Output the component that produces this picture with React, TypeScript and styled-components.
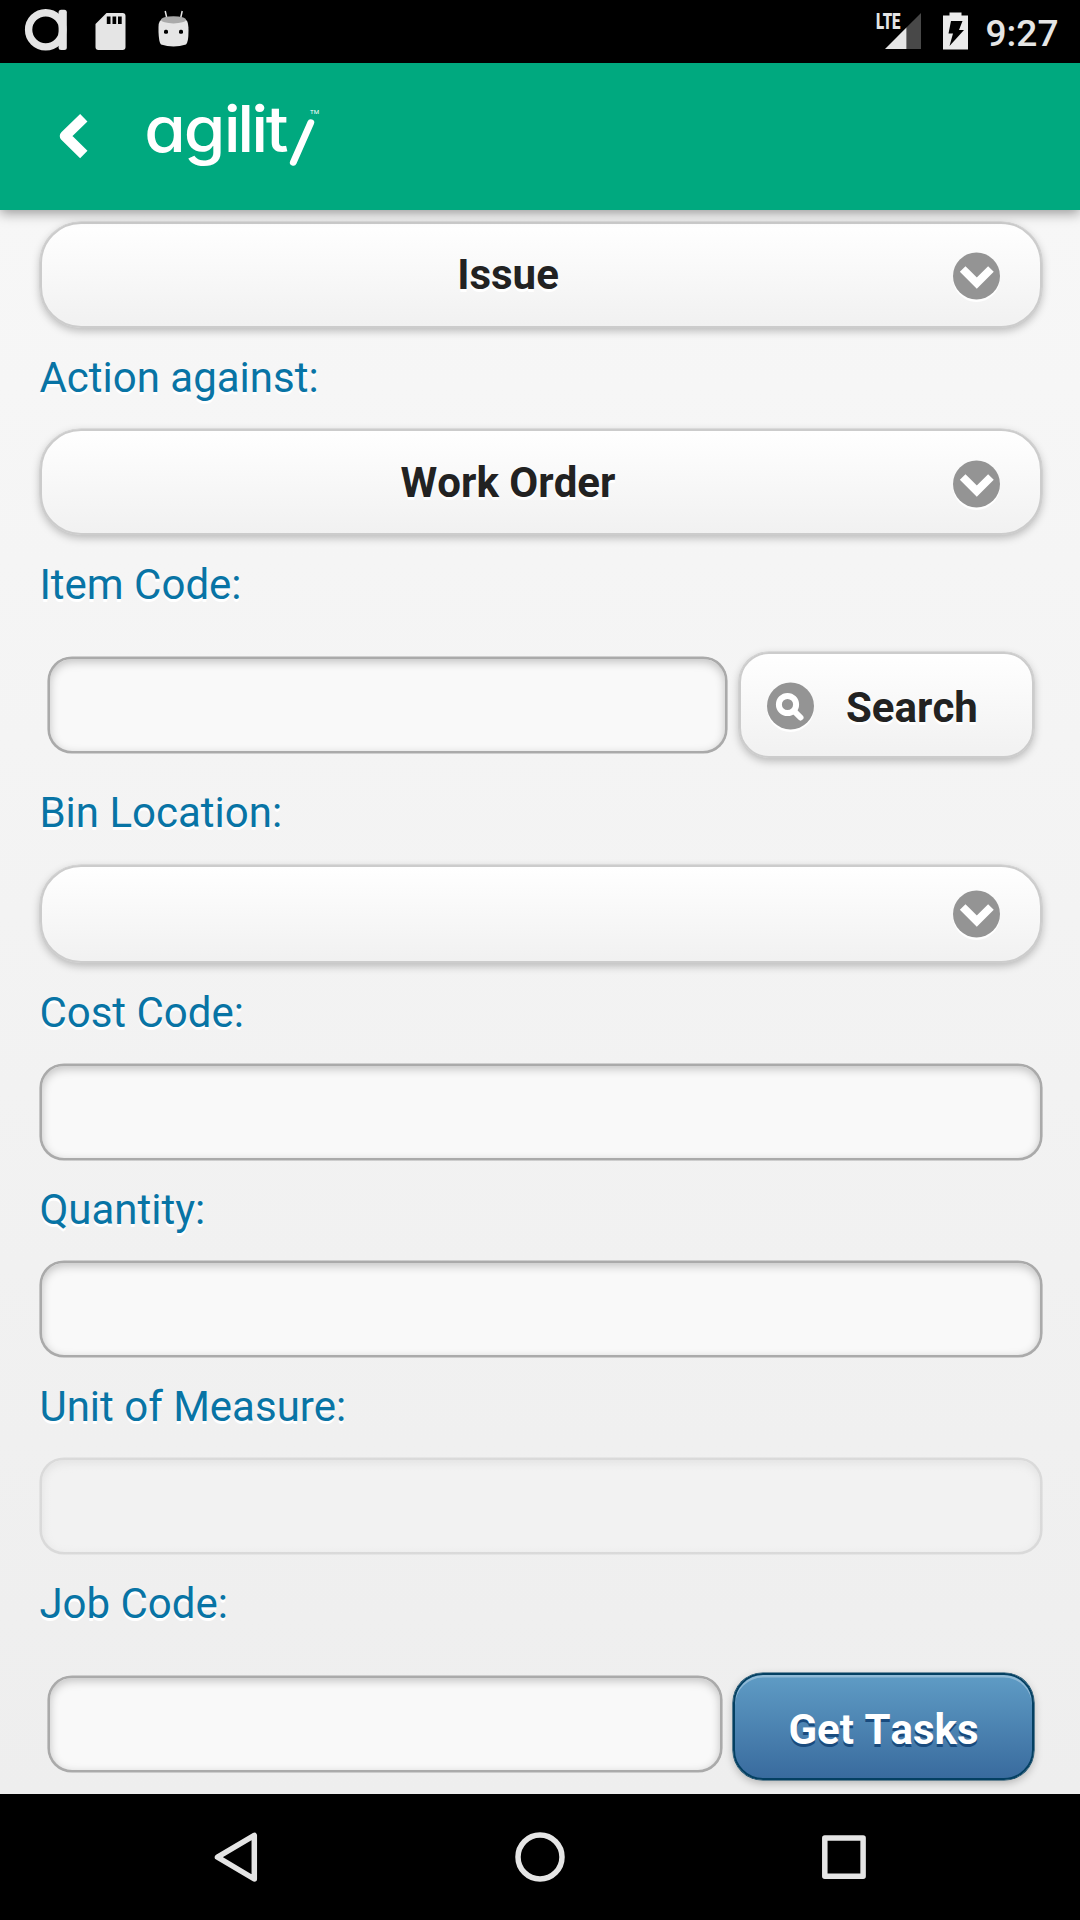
import React from "react";
import styled, { createGlobalStyle, css } from "styled-components";

const GlobalStyle = createGlobalStyle`
  * { box-sizing: border-box; }
  body { margin: 0; background: #000; }
`;

const Screen = styled.div`
  width: 1080px;
  height: 1920px;
  display: flex;
  flex-direction: column;
  overflow: hidden;
  font-family: Roboto, "Liberation Sans", sans-serif;
  font-size: 42px;
`;

const StatusBar = styled.div`
  height: 63px;
  flex: none;
  display: flex;
  justify-content: space-between;
  background: #000;
`;

const Header = styled.header`
  height: 147px;
  flex: none;
  background: #00a97f;
  box-shadow: 0 3px 12px rgba(0, 0, 0, 0.4);
  z-index: 1;
`;

const Page = styled.main`
  flex: 1;
  display: flex;
  flex-direction: column;
  padding: 12px 38px 0 40px;
  background: linear-gradient(#f7f7f7, #eee);
  overflow: hidden;
`;

const Label = styled.label<{ $gap?: number }>`
  margin: ${(p) => p.$gap ?? 25}px 0 0 -0.6px;
  height: 50px;
  line-height: 50px;
  color: #0874a5;
  text-shadow: 0 2.6px 0 #fff;
`;

const raised = css`
  border: 2px solid #ccc;
  background: linear-gradient(#fff, #f1f1f1);
  box-shadow: 0 0 0 0.6px #ccc, 0 3px 8px rgba(0, 0, 0, 0.25);
  color: #222;
  font: bold 42px/50px Roboto, "Liberation Sans", sans-serif;
  font-kerning: none;
  text-shadow: 0 2.6px 0 #fff;
`;

const Select = styled.button<{ $gap?: number; $height?: number; $drop?: number }>`
  ${raised}
  flex: none;
  display: flex;
  align-items: center;
  width: 1002px;
  height: ${(p) => p.$height ?? 106}px;
  margin: ${(p) => p.$gap ?? 0}px 0 0;
  padding: ${(p) => p.$drop ?? 0}px 39px 0 40px;
  border-radius: 41px;
`;

const SelectText = styled.span`
  flex: 1;
  padding-right: 18px;
  text-align: center;
`;

const IconDisc = styled.svg<{ $drop?: number }>`
  flex: none;
  display: block;
  width: 49px;
  height: 50px;
  margin-top: ${(p) => p.$drop ?? 4}px;
`;

const Input = styled.input<{ $gap?: number; $width?: number }>`
  flex: none;
  display: block;
  width: ${(p) => p.$width ?? 1002}px;
  height: 96px;
  margin: ${(p) => p.$gap ?? 26}px 0 0;
  padding: 0 16px;
  border: 2px solid #aaa;
  border-radius: 24px;
  background: #f9f9f9;
  box-shadow: 0 0 0 0.6px #aaa, inset 0 3px 10px rgba(0, 0, 0, 0.22);
  font: 42px Roboto, sans-serif;
  &:disabled {
    opacity: 0.3;
  }
`;

const LookupRow = styled.div<{ $gap: number }>`
  display: flex;
  justify-content: space-between;
  margin-top: ${(p) => p.$gap}px;
  padding: 0 8px;
`;

const SearchButton = styled.button`
  ${raised}
  display: flex;
  align-items: center;
  width: 295px;
  height: 106px;
  padding: 0 0 0 25px;
  border-radius: 30px;
`;

const SearchText = styled.span`
  margin: 6px 0 0 31px;
`;

const TasksButton = styled.button`
  ${raised}
  width: 301px;
  height: 107px;
  padding: 7px 0 0;
  border: 2px solid #044062;
  border-radius: 30px;
  background: linear-gradient(#5f9cc5, #396b9e);
  box-shadow: 0 0 0 0.6px #044062, 0 3px 8px rgba(0, 0, 0, 0.25),
    inset 0 2.6px 0 rgba(255, 255, 255, 0.3);
  color: #fff;
  text-shadow: 0 2.6px 0 #194b7e;
`;

const NavBar = styled.nav`
  height: 126px;
  flex: none;
  background: #000;
`;

const Drawing = styled.svg`
  display: block;
`;

const Wordmark = styled.text`
  font: 500 64px Inter, sans-serif;
  font-feature-settings: "cv11" 1;
`;

function ArrowDisc({ drop }: { drop?: number }) {
  return (
    <IconDisc viewBox="0 0 49 50" $drop={drop}>
      <circle cx="24.5" cy="26.5" r="23.5" fill="#fff" />
      <circle cx="24.5" cy="24" r="23.5" fill="#949494" />
      <path d="M13.500 19.800 24.8 31 36.100 19.800" fill="none" stroke="#fff" strokeWidth="8" strokeLinecap="square" />
    </IconDisc>
  );
}

function SearchDisc() {
  return (
    <IconDisc viewBox="0 0 49 50">
      <circle cx="24.5" cy="26.5" r="23.5" fill="#fff" />
      <circle cx="24.5" cy="24" r="23.5" fill="#949494" />
      <circle cx="21.5" cy="22.5" r="8.6" fill="none" stroke="#fff" strokeWidth="6" />
      <path d="M28 29 34.5 35.500" stroke="#fff" strokeWidth="6" strokeLinecap="round" />
    </IconDisc>
  );
}

export default function App() {
  return (
    <>
      <GlobalStyle />
      <Screen>
        <StatusBar>
          <Drawing width="240" height="63" fill="#e5e5e5">
            <circle cx="45.700" cy="29.800" r="17.100" fill="none" stroke="#e5e5e5" strokeWidth="7.400" />
            <rect x="58.600" y="9.700" width="8.200" height="40.300" rx="2.500" />
            <path d="M106.500 13H122.500Q125.500 13 125.500 16V47Q125.500 50 122.500 50H98.500Q95.500 50 95.500 47V24Z" />
            <path d="M106.800 16.500h3.700v7.500h-3.700zM112.500 16.500h3.700v7.500h-3.700zM118 16.500h3.700v7.500H118z" fill="#000" />
            <path d="M165.200 11 167.500 21M182.200 11 180 21" stroke="#e5e5e5" strokeWidth="1.500" />
            <path d="M161 20Q158 21 158.500 32 159 43 161 44.500 173.500 48.500 186 44.500 188.500 42 188.500 31 188.500 21 186 20Z" />
            <ellipse cx="173.500" cy="19.800" rx="12.500" ry="3.600" fill="#aaa" />
            <rect x="164" y="29.700" width="4" height="4" rx="1.500" fill="#000" />
            <rect x="179" y="29.700" width="4" height="4" rx="1.500" fill="#000" />
          </Drawing>
          <Drawing width="240" height="63" fill="#e5e5e5">
            <text x="36" y="29" fontSize="22" fontWeight="900" fontFamily="Roboto" textLength="24.500" lengthAdjust="spacingAndGlyphs">LTE</text>
            <path d="M45 49 66.700 27.300V49Z" />
            <path d="M66.700 27.300 81 13V49H66.700Z" fill="#484848" />
            <path d="M103 15.500h6.500v-3h12v3h6.500v34h-25z" fill="#ebebeb" />
            <path d="M111 21h11.500l-3.500 9h5L109.500 46l3.500-12.500h-4.500z" fill="#000" />
            <text x="145.500" y="46" fontSize="37.500" fontWeight="500" fontFamily="Roboto" textLength="73" lengthAdjust="spacingAndGlyphs">9:27</text>
          </Drawing>
        </StatusBar>
        <Header>
          <Drawing width="360" height="147" fill="#fff">
            <path d="M83.800 54.700 65 73 83.800 91.500" fill="none" stroke="#fff" strokeWidth="10.500" strokeLinejoin="round" />
            <Wordmark y="89" transform="scale(1.05 1)" x="137.400 175 213 226 239.400 253">agilit</Wordmark>
            <path d="M293.300 99.300 310.800 59.700" stroke="#fff" strokeWidth="6.800" strokeLinecap="round" />
            <text x="310" y="51" fontSize="6" fontFamily="Roboto" textLength="9" lengthAdjust="spacingAndGlyphs">TM</text>
          </Drawing>
        </Header>
        <Page>
          <Select>
            <SelectText>Issue</SelectText>
            <ArrowDisc />
          </Select>
          <Label>Action against:</Label>
          <Select $gap={26} $drop={2}>
            <SelectText>Work Order</SelectText>
            <ArrowDisc />
          </Select>
          <Label>Item Code:</Label>
          <LookupRow $gap={42}>
            <Input $gap={5} $width={679} />
            <SearchButton>
              <SearchDisc />
              <SearchText>Search</SearchText>
            </SearchButton>
          </LookupRow>
          <Label $gap={30}>Bin Location:</Label>
          <Select $gap={27} $height={98}>
            <SelectText />
            <ArrowDisc drop={2} />
          </Select>
          <Label>Cost Code:</Label>
          <Input />
          <Label>Quantity:</Label>
          <Input />
          <Label>Unit of Measure:</Label>
          <Input disabled />
          <Label>Job Code:</Label>
          <LookupRow $gap={44}>
            <Input $gap={3} $width={674} />
            <TasksButton>Get Tasks</TasksButton>
          </LookupRow>
        </Page>
        <NavBar>
          <Drawing width="1080" height="126" fill="none" stroke="#e5e5e5" strokeWidth="5.500" strokeLinejoin="round">
            <path d="M217.500 63.200 254.300 41.300V85Z" />
            <circle cx="540" cy="63" r="22" />
            <rect x="824.800" y="44" width="38.300" height="38.300" />
          </Drawing>
        </NavBar>
      </Screen>
    </>
  );
}
